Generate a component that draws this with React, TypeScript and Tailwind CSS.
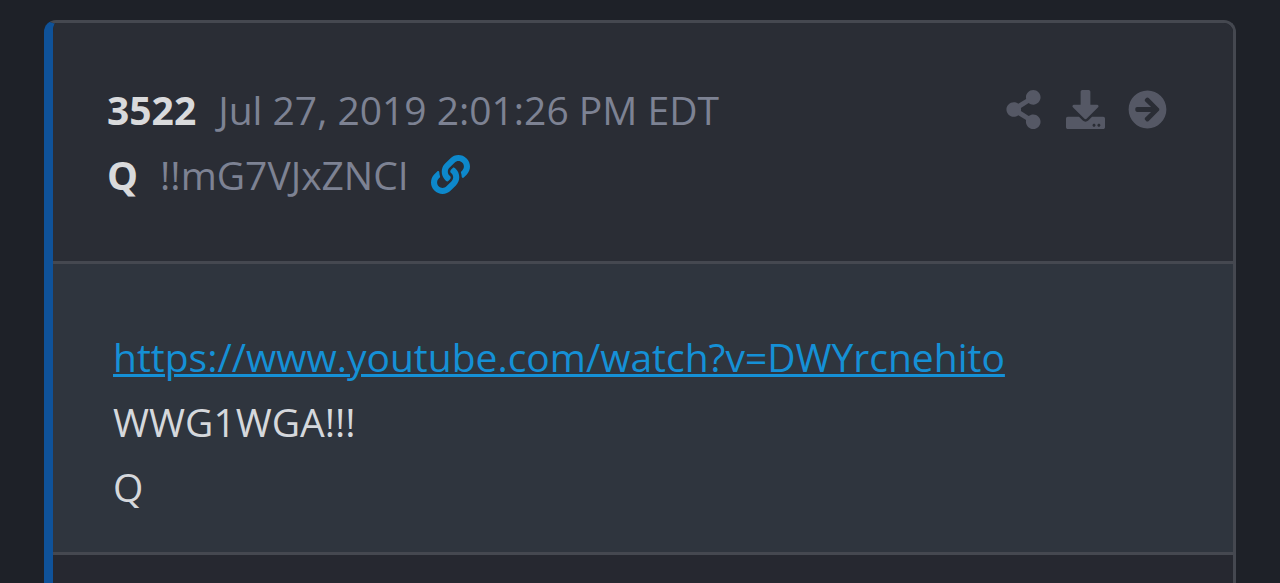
import React from "react";
import {
  FaArrowCircleRight,
  FaDownload,
  FaLink,
  FaShareAlt,
} from "react-icons/fa";
import { IconType } from "react-icons";

type ActionType = {
  name: string;
  icon: IconType;
};

const ACTIONS: ActionType[] = [
  { name: "Share", icon: FaShareAlt },
  { name: "Download", icon: FaDownload },
  { name: "Go to post", icon: FaArrowCircleRight },
];

const VIDEO_URL = "https://www.youtube.com/watch?v=DWYrcnehito";

const PostHeader = () => {
  return (
    <header className="flex items-start justify-between bg-[#2a2d35] py-[54px] pl-[54px] pr-[66px]">
      <div className="leading-[65px] text-[#7d8293]">
        <div className="flex items-center gap-x-[22px]">
          <strong className="font-bold text-[#d9dadc]">3522</strong>
          <time dateTime="2019-07-27T14:01:26-04:00">
            Jul 27, 2019 2:01:26 PM EDT
          </time>
        </div>
        <div className="flex items-center gap-x-[22px]">
          <strong className="font-bold text-[#d9dadc]">Q</strong>
          <span>!!mG7VJxZNCI</span>
          <a href="#3522" aria-label="Link to post" className="text-[#0d88cb]">
            <FaLink className="size-[39px]" />
          </a>
        </div>
      </div>

      {/* Actions */}
      <div className="flex h-[65px] items-center gap-x-[23px] text-[#555865]">
        {ACTIONS.map(({ name, icon: Icon }) => (
          <button key={name} type="button" aria-label={name}>
            <Icon className="h-[39px] w-auto" />
          </button>
        ))}
      </div>
    </header>
  );
};

const App = () => {
  return (
    <main className="min-h-screen bg-[#1e2128] px-11 pt-5 font-['Open_Sans','Noto_Sans',sans-serif] text-[39px]">
      <article className="overflow-hidden rounded-t-[12px] border-t-[3px] border-r-[3px] border-l-[9px] border-[#454850] border-l-[#0f5299]">
        <PostHeader />
        <div className="border-y-[3px] border-[#454850] bg-[#2f353e] px-[60px] pt-[60px] pb-[33px] leading-[65px] text-[#d5d8dc]">
          <p>
            <a
              href={VIDEO_URL}
              className="text-[#1590d6] underline decoration-[3px]"
            >
              {VIDEO_URL}
            </a>
          </p>
          <p>WWG1WGA!!!</p>
          <p>Q</p>
        </div>
        <footer className="h-12 bg-[#262830]" />
      </article>
    </main>
  );
};

export default App;
